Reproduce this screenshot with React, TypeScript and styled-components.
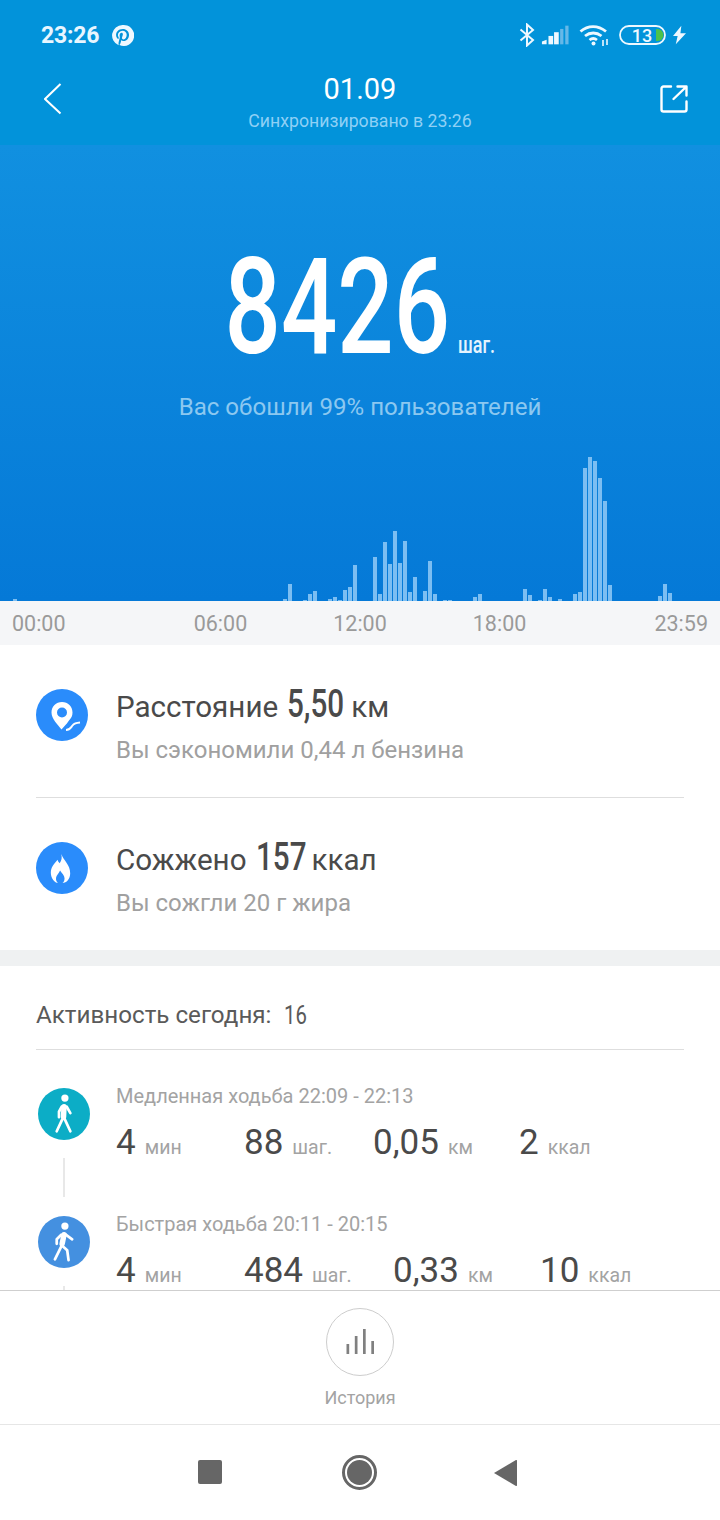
import React from 'react';
import styled, {createGlobalStyle} from 'styled-components';

const GlobalStyle = createGlobalStyle`
  html, body {
    margin: 0;
    padding: 0;
    background: #fff;
    font-family: Roboto, "Liberation Sans", sans-serif;
  }
`;

const Page = styled.div`
  width: 720px;
  height: 1520px;
  display: flex;
  flex-direction: column;
  overflow: hidden;
  background: #fff;
`;

const Header = styled.header`
  height: 145px;
  flex: none;
  background: #0293da;
  color: #fff;
`;

const StatusBar = styled.div`
  height: 70px;
  padding: 0 34px 0 41px;
  display: flex;
  align-items: center;
  justify-content: space-between;
`;

const StatusLeft = styled.div`
  display: flex;
  align-items: center;
  gap: 12px;
`;

const Clock = styled.span`
  font-size: 23px;
  font-weight: 700;
  letter-spacing: -0.2px;
  color: #e8f6ff;
`;

const StatusRight = styled.div`
  display: flex;
  align-items: center;
`;

const NavBar = styled.div`
  height: 60px;
  margin-top: -1px;
  padding: 0 32px 0 44px;
  display: flex;
  align-items: center;
  justify-content: space-between;
`;

const NavTitle = styled.div`
  display: flex;
  flex-direction: column;
  align-items: center;
  padding-top: 7px;
  margin-right: 2px;
`;

const NavDate = styled.div`
  font-size: 29px;
  line-height: 34px;
`;

const NavSync = styled.div`
  font-size: 17.7px;
  line-height: 24px;
  margin-top: 3px;
  color: #8fd0f5;
`;

const Hero = styled.section`
  height: 456px;
  flex: none;
  display: flex;
  flex-direction: column;
  align-items: center;
  background: linear-gradient(#1190e0, #0579d7);
`;

const StepsRow = styled.div`
  margin-top: 104px;
  margin-right: 46px;
  width: 218px;
  height: 118px;
  display: flex;
  justify-content: center;
  position: relative;
`;

const StepsValue = styled.div`
  font-size: 134px;
  font-weight: 500;
  line-height: 118px;
  color: #fff;
  transform: scaleX(0.74);
`;

const StepsUnit = styled.span`
  position: absolute;
  left: 100%;
  bottom: 10px;
  margin-left: 12px;
  font-size: 24px;
  font-weight: 500;
  line-height: 24px;
  color: #e6f4fe;
  white-space: nowrap;
  transform: scaleX(0.75);
  transform-origin: left;
`;

const Rank = styled.div`
  margin-top: 25px;
  font-size: 24.1px;
  line-height: 30px;
  color: #8cc8f0;
`;

const Chart = styled.div`
  margin-top: auto;
  width: 100%;
  height: 150px;
  padding-left: 3px;
  box-sizing: border-box;
  display: flex;
  align-items: flex-end;
`;

const Bar = styled.div`
  flex: none;
  width: 4px;
  margin-right: 1px;
  background: #7cbef2;
`;

const Axis = styled.div`
  height: 44px;
  flex: none;
  padding: 0 12px;
  display: flex;
  align-items: center;
  justify-content: space-between;
  background: #f5f6f8;
  color: #9a9a9a;
  font-size: 21.5px;
`;

const AxisMiddle = styled.div`
  display: flex;
  gap: 86px;
`;

const Summary = styled.section`
  padding: 0 36px;
  flex: none;
`;

const SummaryRow = styled.div<{$first?: boolean}>`
  padding-top: 39px;
  height: ${p => (p.$first ? 113 : 113)}px;
  display: flex;
  align-items: flex-start;
  gap: 28px;
  border-bottom: ${p => (p.$first ? '1px solid #dedede' : 'none')};
`;

const RoundIcon = styled.div<{$color: string; $top?: number}>`
  width: 52px;
  height: 52px;
  margin-top: ${p => p.$top || 0}px;
  flex: none;
  border-radius: 50%;
  background: ${p => p.$color};
  display: flex;
  align-items: center;
  justify-content: center;
`;

const SummaryTitle = styled.div`
  display: flex;
  align-items: baseline;
  gap: 9px;
  font-size: 29.6px;
  line-height: 40px;
  color: #4a4a4a;
`;

const SummaryValue = styled.span<{$width: number}>`
  display: inline-block;
  width: ${p => p.$width}px;
  font-size: 39.5px;
  font-weight: 500;
  white-space: nowrap;
  transform: scaleX(0.75);
  transform-origin: left;
`;

const SummaryNote = styled.div`
  font-size: 24px;
  line-height: 30px;
  margin-top: 8px;
  color: #a0a0a0;
`;

const Divider = styled.div`
  height: 16px;
  flex: none;
  background: #eff1f2;
`;

const Activity = styled.section`
  flex: 1;
  min-height: 0;
  padding: 0 36px;
  overflow: hidden;
`;

const ActivityHeader = styled.div`
  height: 69px;
  padding-top: 14px;
  display: flex;
  align-items: center;
  gap: 13px;
  border-bottom: 1px solid #dedede;
  font-size: 24.2px;
  color: #5a5a5a;
`;

const ActivityCount = styled.span`
  display: inline-block;
  width: 23px;
  font-size: 26px;
  white-space: nowrap;
  transform: scaleX(0.78);
  transform-origin: left;
`;

const ActivityList = styled.div`
  padding-top: 38px;
  display: flex;
  flex-direction: column;
  gap: 51px;
`;

const ActivityItem = styled.div`
  display: flex;
  gap: 26px;
  padding-left: 2px;
  position: relative;
`;

const Connector = styled.div`
  position: absolute;
  left: 27px;
  top: 70px;
  width: 2px;
  height: 39px;
  background: #e8e8e8;
`;

const ActivityBody = styled.div`
  flex: 1;
`;

const ActivityTitle = styled.div`
  font-size: 20px;
  line-height: 17px;
  color: #a3a3a3;
`;

const Stats = styled.div`
  margin-top: 16px;
  display: flex;
`;

const Stat = styled.div<{$width: number}>`
  width: ${p => p.$width}px;
  flex: none;
  display: flex;
  align-items: baseline;
  gap: 9px;
`;

const StatValue = styled.span`
  font-size: 35px;
  line-height: 44px;
  color: #4a4a4a;
`;

const StatUnit = styled.span`
  font-size: 19.5px;
  color: #a3a3a3;
`;

const BottomTab = styled.div`
  height: 135px;
  flex: none;
  box-sizing: border-box;
  border-top: 1px solid #cfcfcf;
  border-bottom: 1px solid #e6e6e6;
  display: flex;
  flex-direction: column;
  align-items: center;
  padding-top: 17px;
  background: #fff;
`;

const HistoryCircle = styled.div`
  width: 68px;
  height: 68px;
  box-sizing: border-box;
  border: 1px solid #cdcdcd;
  border-radius: 50%;
  display: flex;
  align-items: center;
  justify-content: center;
`;

const HistoryLabel = styled.div`
  margin-top: 10px;
  font-size: 18px;
  line-height: 24px;
  color: #a3a3a3;
`;

const SystemNav = styled.nav`
  height: 95px;
  flex: none;
  padding: 0 203px 0 198px;
  display: flex;
  align-items: center;
  justify-content: space-between;
`;

const Square = styled.div`
  width: 24px;
  height: 24px;
  margin-bottom: 1px;
  border-radius: 2px;
  background: #666;
`;

const HomeButton = styled.div`
  width: 35px;
  height: 35px;
  margin-left: 3px;
  box-sizing: border-box;
  border: 3px solid #666;
  border-radius: 50%;
  padding: 2px;
  background: #666;
  background-clip: content-box;
`;

const bars: Record<number, number> = {
  13: 2, 283: 2, 288: 17, 303: 1, 308: 7, 313: 10, 328: 2, 333: 4, 338: 1, 343: 11, 348: 14, 353: 36,
  373: 44, 378: 7, 383: 59, 388: 37, 393: 70, 398: 38, 403: 60, 408: 9, 413: 24, 423: 10, 428: 40, 433: 7,
  443: 1, 448: 1, 473: 4, 478: 7, 523: 12, 528: 6, 538: 1, 543: 12, 548: 4, 558: 2, 573: 7, 578: 9,
  583: 133, 588: 144, 593: 140, 598: 123, 603: 100, 608: 16, 658: 5, 663: 17, 668: 8,
};

const slots = Array.from({length: 143}, (_, i) => bars[3 + i * 5] || 0);

const PinterestIcon = () => (
  <svg width="23" height="23" viewBox="0 0 24 24" fill="#eef8ff">
    <path fillRule="evenodd" d="M12 1a11 11 0 0 0-4 21.2c-.1-.9-.2-2.2 0-3.2l1.300-5.500s-.3-.7-.3-1.600c0-1.500.9-2.700 2-2.700.9 0 1.400.7 1.400 1.500 0 .9-.6 2.300-.9 3.500-.3 1.100.5 1.900 1.600 1.900 1.900 0 3.300-2 3.300-4.800 0-2.500-1.800-4.300-4.400-4.300-3 0-4.800 2.300-4.800 4.600 0 .9.400 1.900.8 2.400.1.100.1.200.1.300l-.3 1.200c0 .2-.2.200-.4.100-1.300-.6-2.100-2.500-2.100-4.100 0-3.300 2.400-6.400 7-6.400 3.700 0 6.500 2.600 6.500 6.100 0 3.700-2.300 6.600-5.500 6.600-1.100 0-2.100-.6-2.500-1.200l-.7 2.600c-.2.900-.9 2.100-1.300 2.800A11 11 0 1 0 12 1z"/>
  </svg>
);

const BluetoothIcon = () => (
  <svg width="16" height="24" viewBox="0 0 16 24" fill="none" stroke="#eef8ff" strokeWidth="2">
    <path d="M1.500 6.500 14 17l-6 5.500v-21L14 7 1.500 17.500"/>
  </svg>
);

const SignalIcon = () => (
  <svg width="28" height="20" viewBox="0 0 30 20" style={{marginLeft: 6}}>
    <path d="M1 20v-3l5-2v5z" fill="#eef8ff"/>
    <rect x="8" y="11" width="5" height="9" fill="#eef8ff"/>
    <rect x="14" y="7" width="5" height="13" fill="#eef8ff"/>
    <rect x="20.500" y="3.500" width="3.500" height="16.500" fill="#66b8e8"/>
    <rect x="26" y="0" width="3.500" height="20" fill="#66b8e8"/>
  </svg>
);

const WifiIcon = () => (
  <svg width="30" height="22" viewBox="0 0 30 22" fill="none" stroke="#eef8ff" strokeWidth="2.800" style={{marginLeft: 10}}>
    <path d="M1.500 7.500C9 1 19 1 27 7.500"/>
    <path d="M6 12c5-4 11.500-4 16.500 0"/>
    <path d="M10.500 16c2.500-2 5-2 7.500 0"/>
    <circle cx="14.500" cy="19.500" r="2" fill="#eef8ff" stroke="none"/>
    <path d="M24 16v6M28 15v6" strokeWidth="1.600"/>
  </svg>
);

const BatteryIcon = () => (
  <svg width="47" height="22" viewBox="0 0 47 22" style={{marginLeft: 10}}>
    <rect x="1" y="2" width="45" height="18" rx="9" fill="none" stroke="#eef8ff" strokeWidth="1.800"/>
    <path d="M37 5h1.500a6 6 0 0 1 0 12H37z" fill="#4cc24a"/>
    <text x="23" y="17.500" textAnchor="middle" fontFamily="Roboto, sans-serif" fontSize="18" fontWeight="500" fill="#eef8ff">13</text>
  </svg>
);

const ChargeIcon = () => (
  <svg width="13" height="20" viewBox="0 0 14 20" fill="#eef8ff" style={{marginLeft: 7}}>
    <path d="M9 0 0 11h5l-2 9 11-12H8z"/>
  </svg>
);

const BackIcon = () => (
  <svg width="18" height="32" viewBox="0 0 18 32" fill="none" stroke="#fff" strokeWidth="2">
    <path d="M16.500 1 1 16l15.500 14.500"/>
  </svg>
);

const ShareIcon = () => (
  <svg width="28" height="28" viewBox="0 0 28 28" fill="none" stroke="#fff" strokeWidth="2.400" strokeLinecap="round" strokeLinejoin="round">
    <path d="M11 1.500H3.500a2 2 0 0 0-2 2v21a2 2 0 0 0 2 2h21a2 2 0 0 0 2-2v-8"/>
    <path d="M13.500 14 26 2M17.500 1.500h9v9"/>
  </svg>
);

const PinIcon = () => (
  <svg width="52" height="52" viewBox="0 0 52 52">
    <path fillRule="evenodd" fill="#fff" d="M26 13C20 13 15.500 17.500 15.500 23.500 15.500 30 22 36 25.500 40.500 28 37.500 30 36 33 31.500 35.500 29 36.500 26.500 36.500 23.500 36.500 17.500 32 13 26 13zM26 18.500a5 5 0 1 1 0 10 5 5 0 0 1 0-10z"/>
    <path d="M30 41c4 0 4.500-2 6.500-4.500S40 33.800 44 33.500" fill="none" stroke="#fff" strokeWidth="2"/>
  </svg>
);

const FlameIcon = () => (
  <svg width="21" height="29" viewBox="0 0 26 30" style={{marginRight: 3}} preserveAspectRatio="none">
    <path fillRule="evenodd" fill="#fff" d="M14 0c1 4 .5 6.500-2 9.500C10.500 8.500 9.500 7 9.500 6 5 10 1 14 1 19.500 1 25.500 6 30 10 30c-1.500-1-3-3-2.500-5.500.5-2.500 3-4 5-7.500 2 3 5.500 5 5.500 8 0 2.500-1 4-2.500 5C20.500 30 25 26 25 20 25 11 17 7 14 0z"/>
  </svg>
);

const WalkIcon = ({fast}: {fast?: boolean}) => (
  <svg width="26" height="40" viewBox="0 0 26 44" fill="none" stroke="#fff" strokeLinecap="round" strokeLinejoin="round">
    {fast ? (
      <>
        <circle cx="14" cy="4.500" r="4" fill="#fff" stroke="none"/>
        <path d="M13 14 11 24" strokeWidth="6"/>
        <path d="M11 25 3 41M11 26l5.500 5L18 42M15 14l7 5M10 14l-5 5v5" strokeWidth="3"/>
      </>
    ) : (
      <>
        <circle cx="14" cy="4.500" r="4" fill="#fff" stroke="none"/>
        <path d="M13 14 12.500 25" strokeWidth="6"/>
        <path d="M12 26 5 41M13 26l7 15M16 14l4 7M10.500 14l-3 5.500v6" strokeWidth="3"/>
      </>
    )}
  </svg>
);

const BarsIcon = () => (
  <svg width="28" height="26" viewBox="0 0 28 26" fill="#808080">
    <rect x="0.500" y="15" width="2.700" height="10"/>
    <rect x="8.800" y="7" width="2.700" height="18"/>
    <rect x="17" y="0" width="2.700" height="25"/>
    <rect x="25.300" y="12" width="2.700" height="13"/>
  </svg>
);

const BackTriangle = () => (
  <svg width="23" height="26" viewBox="0 0 23 26" fill="#666">
    <path d="M23 1v24a1 1 0 0 1-1.500.8L0 13 21.500.2A1 1 0 0 1 23 1z"/>
  </svg>
);

const activities = [
  {
    title: 'Медленная ходьба 22:09 - 22:13',
    color: '#0cadc6',
    fast: false,
    stats: [['4', 'мин', 128], ['88', 'шаг.', 129], ['0,05', 'км', 146], ['2', 'ккал', 100]] as const,
  },
  {
    title: 'Быстрая ходьба 20:11 - 20:15',
    color: '#4490e0',
    fast: true,
    stats: [['4', 'мин', 128], ['484', 'шаг.', 149], ['0,33', 'км', 147], ['10', 'ккал', 100]] as const,
  },
];

function App() {
  return (
    <Page>
      <GlobalStyle/>
      <Header>
        <StatusBar>
          <StatusLeft>
            <Clock>23:26</Clock>
            <PinterestIcon/>
          </StatusLeft>
          <StatusRight>
            <BluetoothIcon/>
            <SignalIcon/>
            <WifiIcon/>
            <BatteryIcon/>
            <ChargeIcon/>
          </StatusRight>
        </StatusBar>
        <NavBar>
          <BackIcon/>
          <NavTitle>
            <NavDate>01.09</NavDate>
            <NavSync>Синхронизировано в 23:26</NavSync>
          </NavTitle>
          <ShareIcon/>
        </NavBar>
      </Header>

      <Hero>
        <StepsRow>
          <StepsValue>8426</StepsValue>
          <StepsUnit>шаг.</StepsUnit>
        </StepsRow>
        <Rank>Вас обошли 99% пользователей</Rank>
        <Chart>
          {slots.map((h, i) => <Bar key={i} style={{height: h}}/>)}
        </Chart>
      </Hero>

      <Axis>
        <span>00:00</span>
        <AxisMiddle>
          <span>06:00</span>
          <span>12:00</span>
          <span>18:00</span>
        </AxisMiddle>
        <span>23:59</span>
      </Axis>

      <Summary>
        <SummaryRow $first>
          <RoundIcon $color="#2a8cfb" $top={5}><PinIcon/></RoundIcon>
          <div>
            <SummaryTitle>Расстояние <SummaryValue $width={55}>5,50</SummaryValue> км</SummaryTitle>
            <SummaryNote>Вы сэкономили 0,44 л бензина</SummaryNote>
          </div>
        </SummaryRow>
        <SummaryRow>
          <RoundIcon $color="#2a8cfb" $top={5}><FlameIcon/></RoundIcon>
          <div>
            <SummaryTitle>Сожжено <SummaryValue $width={47}>157</SummaryValue> ккал</SummaryTitle>
            <SummaryNote>Вы сожгли 20 г жира</SummaryNote>
          </div>
        </SummaryRow>
      </Summary>

      <Divider/>

      <Activity>
        <ActivityHeader>
          Активность сегодня:
          <ActivityCount>16</ActivityCount>
        </ActivityHeader>
        <ActivityList>
          {activities.map(a => (
            <ActivityItem key={a.title}>
              <RoundIcon $color={a.color}><WalkIcon fast={a.fast}/></RoundIcon>
              <Connector/>
              <ActivityBody>
                <ActivityTitle>{a.title}</ActivityTitle>
                <Stats>
                  {a.stats.map(([value, unit, width]) => (
                    <Stat key={unit} $width={width}>
                      <StatValue>{value}</StatValue>
                      <StatUnit>{unit}</StatUnit>
                    </Stat>
                  ))}
                </Stats>
              </ActivityBody>
            </ActivityItem>
          ))}
        </ActivityList>
      </Activity>

      <BottomTab>
        <HistoryCircle><BarsIcon/></HistoryCircle>
        <HistoryLabel>История</HistoryLabel>
      </BottomTab>

      <SystemNav>
        <Square/>
        <HomeButton/>
        <BackTriangle/>
      </SystemNav>
    </Page>
  );
}

export default App;
